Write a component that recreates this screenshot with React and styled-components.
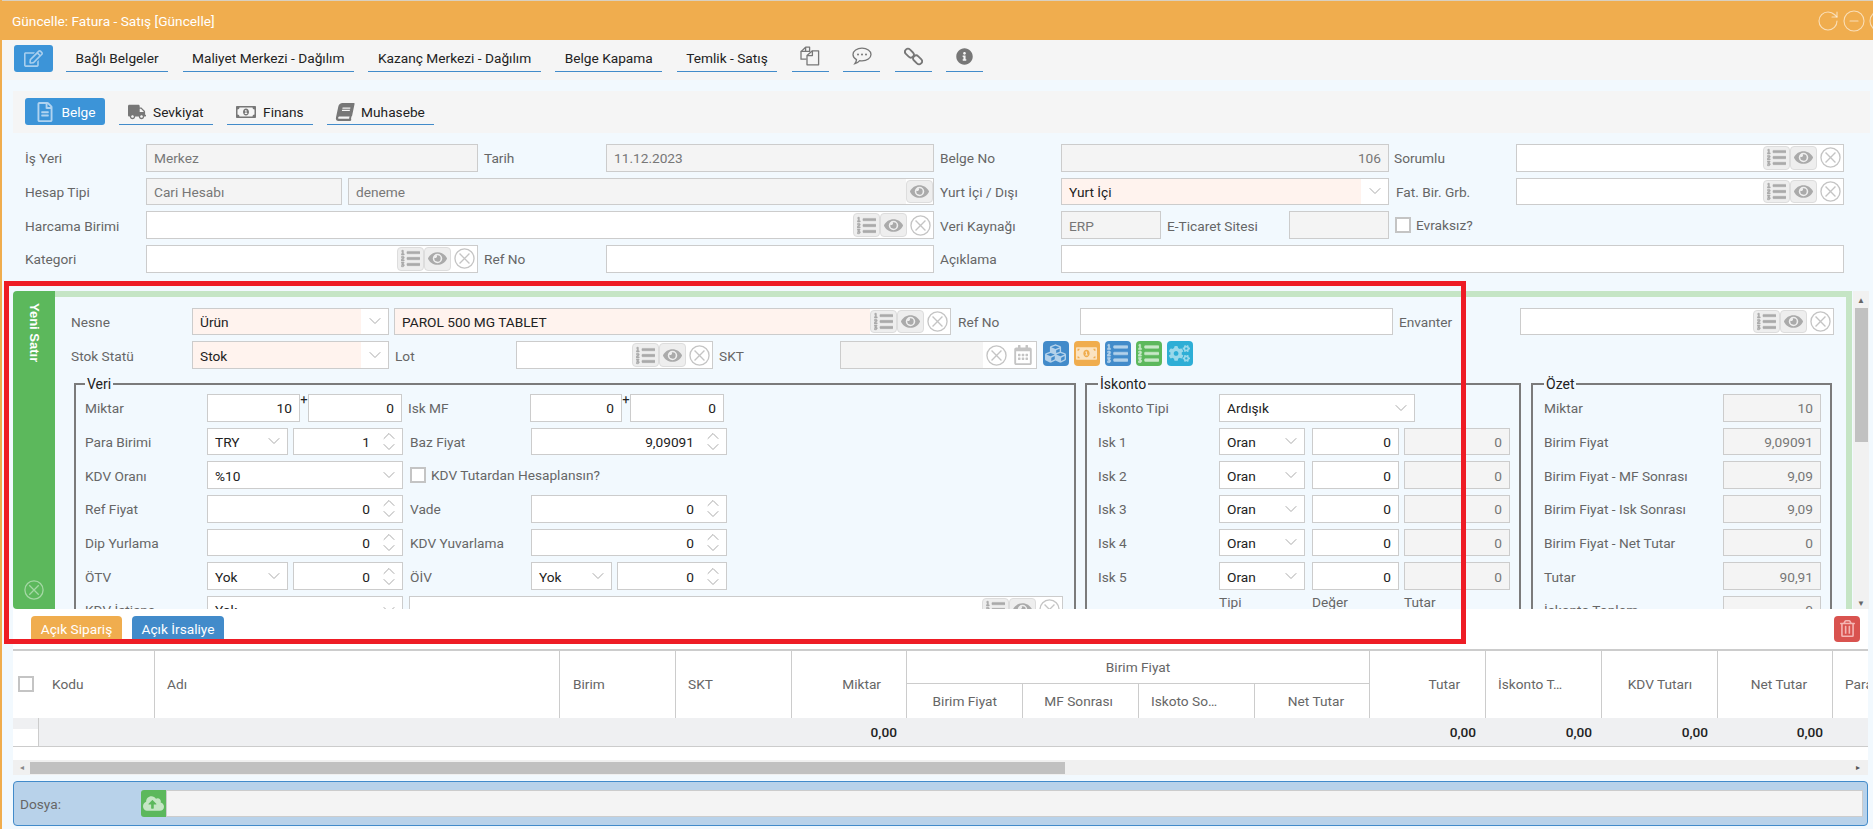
import React from 'react';
import styled, { createGlobalStyle } from 'styled-components';
import {
  FaRegEdit, FaRegFileAlt, FaTruck, FaRegMoneyBillAlt, FaMoneyBillAlt, FaBook,
  FaInfoCircle, FaListOl, FaEye, FaCubes, FaCogs, FaCloudUploadAlt, FaRegCalendarAlt, FaRegTrashAlt,
} from 'react-icons/fa';
import { ChevronDown, ChevronUp, RotateCw, CircleMinus } from 'lucide-react';

const Global = createGlobalStyle`
  html, body { margin: 0; padding: 0; overflow: hidden; background: #f2f9fe; }
  * { box-sizing: border-box; }
`;

const Page = styled.div`
  position: relative;
  width: 1873px;
  height: 829px;
  overflow: hidden;
  border-left: 2px solid #f0ad4e;
  background: #f2f9fe;
  font-family: Roboto, "Liberation Sans", sans-serif;
  font-size: 13.7px;
  color: #666;
`;
const TitleBar = styled.div`
  height: 40px;
  margin-left: -2px;
  background: #f0ad4e;
  border-top: 1px solid #d9d0c0;
  padding: 0 0 0 12px;
  display: flex;
  align-items: center;
  justify-content: space-between;
  color: #fff;
  overflow: hidden;
`;
const TitleIcons = styled.div`
  display: flex;
  gap: 2px;
  width: 57px;
  color: rgba(255, 255, 255, 0.6);
  flex: none;
  svg { flex: none; }
`;
const Toolbar = styled.div`
  height: 40px;
  background: #f5f5f5;
  display: flex;
  align-items: flex-start;
  padding: 5px 0 0 12px;
`;
const EditButton = styled.div`
  width: 39px;
  height: 27px;
  background: #3c94d8;
  border-radius: 3px;
  color: #a9cfee;
  display: flex;
  align-items: center;
  justify-content: center;
  font-size: 19px;
  margin-right: 13px;
`;
const ToolLink = styled.div`
  height: 27px;
  padding: 0 9.5px 1px;
  margin-right: 14.5px;
  border-bottom: 1px solid #428bca;
  color: #222;
  display: flex;
  align-items: center;
  white-space: nowrap;
`;
const ToolIcon = styled(ToolLink)`
  width: 37px;
  padding: 0 0 4px;
  justify-content: center;
  color: #777;
  font-size: 17px;
`;
const TabBar = styled.div`
  margin: 11px 3px 0 11px;
  height: 42px;
  background: #f5f5f5;
  padding: 7px 0 0 12px;
  display: flex;
  align-items: flex-start;
`;
const Tab = styled.div`
  height: 27px;
  display: flex;
  align-items: center;
  gap: 7px;
  padding: 1px 9.5px 0;
  margin-right: 13.5px;
  border-radius: ${p => (p.$active ? '3px' : '0')};
  background: ${p => (p.$active ? '#3c94d8' : 'transparent')};
  color: ${p => (p.$active ? '#fff' : '#222')};
  border-bottom: ${p => (p.$active ? 'none' : '1px solid #428bca')};
  svg { font-size: ${p => p.$icon || 18}px; color: ${p => (p.$active ? '#b0d3f0' : '#777')}; flex: none; }
`;
const SlantBook = styled(FaBook)`
  transform: skewX(-12deg);
`;
const FormGrid = styled.div`
  margin: 11px 0 0 23px;
  display: grid;
  grid-template-columns: 121px 332px 128px 328px 127px 328px 127px 328px;
  grid-auto-rows: 27.67px;
  row-gap: 6px;
`;
const GridLabel = styled.div`
  display: flex;
  align-items: center;
  padding: 1px 0 0 ${p => p.$pad || 0}px;
  white-space: nowrap;
`;
const Split = styled.div`
  display: flex;
  gap: 6px;
  align-items: center;
  grid-column: ${p => p.$span || 'auto'};
  height: 100%;
  min-width: 0;
`;
const Field = styled.div`
  flex: ${p => (p.$w ? 'none' : 1)};
  width: ${p => (p.$w ? `${p.$w}px` : 'auto')};
  height: 100%;
  min-width: 0;
  display: flex;
  align-items: center;
  justify-content: ${p => (p.$right ? 'flex-end' : 'flex-start')};
  padding: 1px 7px 0;
  border: 1px solid #ccc;
  background: ${p => (p.$tone === 'off' ? '#f4f4f4' : p.$tone === 'req' ? '#fff3ee' : '#fff')};
  color: ${p => (p.$tone === 'off' ? '#777' : '#222')};
  white-space: nowrap;
  grid-column: ${p => p.$span || 'auto'};
`;
const Value = styled.span`
  flex: 1;
  align-self: center;
  text-align: right;
  padding: 1px 6px 0 0;
`;
const FieldShell = styled.div`
  flex: ${p => (p.$w ? 'none' : 1)};
  width: ${p => (p.$w ? `${p.$w}px` : 'auto')};
  height: 100%;
  min-width: 0;
  display: flex;
  align-items: stretch;
  border: 1px solid #ccc;
  background: #fff;
  color: #222;
  white-space: nowrap;
  grid-column: ${p => p.$span || 'auto'};
`;
const ShellText = styled.div`
  flex: 1;
  min-width: 0;
  display: flex;
  align-items: center;
  padding: 1px 7px 0;
  background: ${p => (p.$tone === 'off' ? '#f4f4f4' : p.$tone === 'req' ? '#fff3ee' : '#fff')};
  color: ${p => (p.$tone === 'off' ? '#777' : '#222')};
`;
const Arrow = styled.div`
  width: 27px;
  flex: none;
  display: flex;
  align-items: center;
  justify-content: center;
  color: #aaa;
`;
const Spin = styled.div`
  width: 26px;
  flex: none;
  display: flex;
  flex-direction: column;
  align-items: center;
  justify-content: center;
  color: #aaa;
  svg { margin: -4.5px 0; flex: none; }
`;
const GrayButton = styled.div`
  width: 27px;
  margin: 1px 0;
  flex: none;
  border: 1px solid #ddd;
  border-radius: 4px;
  background: #eee;
  color: #aaa;
  display: flex;
  align-items: center;
  justify-content: center;
  font-size: 19px;
`;
const ListIcon = styled(FaListOl)`
  stroke: currentColor;
  stroke-width: 14;
`;
const ClearButton = styled.div`
  width: 26px;
  flex: none;
  display: flex;
  align-items: center;
  justify-content: center;
  color: #c4c4c4;
`;
const PanelRow = styled.div`
  margin: 18px 0 0 11px;
  height: 318px;
  display: flex;
`;
const GreenTab = styled.div`
  width: 42px;
  flex: none;
  background: #5cb85c;
  border-radius: 4px 0 0 4px;
  color: #a5d8a5;
  display: flex;
  flex-direction: column;
  align-items: center;
  justify-content: space-between;
  padding: 12px 0 9px;
`;
const VerticalText = styled.div`
  writing-mode: vertical-rl;
  font-family: "Liberation Sans", sans-serif;
  font-weight: 700;
  font-size: 13px;
  color: #fff;
  white-space: nowrap;
`;
const PanelBody = styled.div`
  width: 1797px;
  flex: none;
  border-top: 6px solid #c5e5c5;
  border-right: 6px solid #c5e5c5;
  overflow: hidden;
  padding: 11px 0 0 16px;
`;
const Row = styled.div`
  display: flex;
  align-items: center;
  height: 27.67px;
  margin-bottom: 6px;
`;
const Label = styled.div`
  width: ${p => p.$w}px;
  flex: none;
  white-space: nowrap;
  padding: 1px 0 0 ${p => p.$pad || 0}px;
`;
const Spacer = styled.div`
  width: ${p => p.$w}px;
  flex: none;
`;
const SquareIcon = styled.div`
  width: 25.5px;
  height: 25px;
  flex: none;
  margin-left: ${p => p.$gap || 5.5}px;
  background: ${p => p.$bg};
  border-radius: 4px;
  color: ${p => p.$fg};
  display: flex;
  align-items: center;
  justify-content: center;
  font-size: 21px;
  align-self: flex-start;
`;
const Sets = styled.div`
  display: flex;
  margin: 7px 0 0 3px;
`;
const Set = styled.fieldset`
  width: ${p => p.$w}px;
  flex: none;
  margin: 0 ${p => p.$gap || 0}px 0 0;
  padding: 2px 0 0 ${p => p.$pad}px;
  border: 2px solid #7b7b7b;
  height: 260px;
  min-width: 0;
`;
const Legend = styled.legend`
  padding: 0 2px;
  color: #222;
  font-size: 14px;
  line-height: 16px;
`;
const Plus = styled.div`
  width: 8px;
  flex: none;
  align-self: flex-start;
  color: #222;
  font-size: 13px;
  line-height: 12px;
  text-align: center;
`;
const CheckBox = styled.div`
  width: 16px;
  height: 16px;
  flex: none;
  border: 2px solid #c4c4c4;
  background: #fff;
  margin-right: 5px;
`;
const SideScroll = styled.div`
  width: 16px;
  flex: none;
  margin-left: 1px;
  background: #f1f1f1;
  display: flex;
  flex-direction: column;
  align-items: center;
  padding-top: 5px;
  color: #666;
  font-size: 8px;
  line-height: 10px;
`;
const SideThumb = styled.div`
  width: 13px;
  height: 134px;
  margin: 2px 0 auto;
  background: #c1c1c1;
`;
const ActionRow = styled.div`
  margin-left: 11px;
  width: 1855px;
  height: 40px;
  background: #fff;
  display: flex;
  align-items: flex-start;
  padding: 7px 8px 0 18px;
  gap: 10px;
`;
const SmallBtn = styled.div`
  height: 27px;
  width: ${p => p.$w}px;
  background: ${p => p.$bg};
  color: #fff;
  border-radius: 4px 4px 0 0;
  display: flex;
  align-items: center;
  justify-content: center;
  white-space: nowrap;
`;
const TrashBtn = styled.div`
  margin-left: auto;
  width: 26px;
  height: 26px;
  background: #d9534f;
  color: #f4b6b4;
  border-radius: 4px;
  display: flex;
  align-items: center;
  justify-content: center;
  font-size: 17px;
`;
const TableWrap = styled.div`
  margin-left: 11px;
  width: 1855px;
  height: 111px;
  background: #fff;
  overflow: hidden;
`;
const ScrollWrap = styled.div`
  margin-left: 11px;
  width: 1855px;
`;
const Table = styled.table`
  border-collapse: separate;
  border-spacing: 0;
  table-layout: fixed;
  width: 1936px;
`;
const Th = styled.th`
  font-weight: 400;
  color: #666;
  text-align: ${p => p.$align || 'left'};
  height: ${p => p.$h || 34}px;
  padding: ${p => (p.$align === 'right' ? '0 25px 0 8px' : p.$align === 'center' ? '0' : p.$flush ? '0' : '0 8px 0 12px')};
  border-top: ${p => (p.$first ? '2px solid #ccc' : 'none')};
  border-bottom: ${p => (p.$rule ? '1px solid #ccc' : 'none')};
  border-right: ${p => (p.$noline ? 'none' : '1px solid #ccc')};
  overflow: hidden;
  white-space: nowrap;
  text-overflow: ellipsis;
`;
const Td = styled.td`
  height: 29px;
  background: ${p => (p.$stub ? 'linear-gradient(#eff0f2 11px, #fff 11px)' : '#eff0f2')};
  border-bottom: 1px solid #ccc;
  border-right: ${p => (p.$stub ? '1px solid #ccc' : 'none')};
  text-align: right;
  padding: 0 10px 0 0;
  color: #222;
  font-weight: 500;
`;
const HeadCheck = styled(CheckBox)`
  margin: 0 0 0 5px;
`;
const HScroll = styled.div`
  height: 15.5px;
  background: #f0f0f0;
  display: flex;
  align-items: stretch;
  padding: 2px 0 1px 17px;
  color: #777;
`;
const HThumb = styled.div`
  width: 1035px;
  background: #c1c1c1;
`;
const ScrollEnd = styled.div`
  margin-left: auto;
  width: 12px;
  font-size: 8px;
  line-height: 12px;
  color: #555;
`;
const ScrollStart = styled.div`
  width: 0;
  font-size: 8px;
  line-height: 12px;
  color: #888;
  margin-left: -10px;
  margin-right: 10px;
`;
const FilePanel = styled.div`
  margin: 6px 0 0 11px;
  width: 1855px;
  height: 45px;
  background: #b8d2ea;
  border: 1px solid #428bca;
  border-radius: 4px;
  display: flex;
  align-items: center;
  padding: 0 4px 0 6px;
`;
const FileLabel = styled.div`
  width: 121px;
  flex: none;
`;
const UploadBtn = styled.div`
  width: 25px;
  height: 27px;
  flex: none;
  background: #5cb85c;
  border-radius: 3px 0 0 3px;
  color: #c5e6c5;
  display: flex;
  align-items: center;
  justify-content: center;
  font-size: 21px;
`;
const FileInput = styled.div`
  flex: 1;
  height: 27px;
  background: #f4f4f4;
  border: 1px solid #ccc;
`;
const Highlight = styled.div`
  position: absolute;
  left: 2px;
  top: 281px;
  width: 1462px;
  height: 363px;
  border: 5px solid #ee1c25;
  pointer-events: none;
`;

const ClearIcon = ({ size = 21 }) => (
  <svg width={size} height={size} viewBox="0 0 22 22" fill="none" stroke="currentColor" strokeWidth="1.4">
    <circle cx="11" cy="11" r="10" />
    <path d="M5.8 5.8 16.2 16.2M16.2 5.8 5.8 16.2" />
  </svg>
);
const FilesIcon = () => (
  <svg width="20" height="20" viewBox="0 0 20 20" fill="none" stroke="currentColor" strokeWidth="1.3" strokeLinejoin="round">
    <path d="M6 1.2h3.6v4.2H5.5L1 5.4v7.8h5.6" />
    <path d="M1 5.6 5.6 1.2V5.4" />
    <path d="M12.4 4.8h6.2V18.8H7V9.6Z" />
    <path d="M7 9.6h5.4V4.8" />
  </svg>
);
const CommentIcon = () => (
  <svg width="20" height="18" viewBox="0 0 20 18" fill="none" stroke="currentColor" strokeWidth="1.3">
    <path d="M10 1.2c5 0 9 2.8 9 6.3s-4 6.3-9 6.3c-.8 0-1.6-.1-2.3-.2-1.2 1.4-2.8 2.4-4.7 2.9.8-1 1.4-2.2 1.5-3.9C2.3 11.4 1 9.6 1 7.5 1 4 5 1.2 10 1.2Z" />
    <circle cx="6" cy="7.5" r="1" fill="currentColor" stroke="none" />
    <circle cx="10" cy="7.5" r="1" fill="currentColor" stroke="none" />
    <circle cx="14" cy="7.5" r="1" fill="currentColor" stroke="none" />
  </svg>
);
const LinkIcon = () => (
  <svg width="19" height="19" viewBox="0 0 19 19" fill="none" stroke="currentColor" strokeWidth="1.8">
    <rect x="0.4" y="3.2" width="10" height="6" rx="3" transform="rotate(45 5.4 6.2)" />
    <rect x="8.6" y="9.8" width="10" height="6" rx="3" transform="rotate(45 13.6 12.8)" />
  </svg>
);

const Clear = () => (
  <ClearButton><ClearIcon /></ClearButton>
);
const Lookup = ({ w, span, tone, children, eyeOnly }) => (
  <FieldShell $w={w} $span={span}>
    <ShellText $tone={tone}>{children}</ShellText>
    {!eyeOnly && <GrayButton><ListIcon /></GrayButton>}
    <GrayButton><FaEye /></GrayButton>
    {!eyeOnly && <Clear />}
  </FieldShell>
);
const Select = ({ w, span, tone, children }) => (
  <FieldShell $w={w} $span={span}>
    <ShellText $tone={tone}>{children}</ShellText>
    <Arrow><ChevronDown size={20} strokeWidth={1.2} /></Arrow>
  </FieldShell>
);
const Spinner = ({ w, children }) => (
  <FieldShell $w={w}>
    <Value>{children}</Value>
    <Spin><ChevronUp size={20} strokeWidth={1.2} /><ChevronDown size={20} strokeWidth={1.2} /></Spin>
  </FieldShell>
);
const Num = ({ w, tone, children }) => (
  <Field $w={w} $right $tone={tone}>{children}</Field>
);

const iskRows = ['Isk 1', 'Isk 2', 'Isk 3', 'Isk 4', 'Isk 5'];
const summary = [
  ['Miktar', '10'], ['Birim Fiyat', '9,09091'], ['Birim Fiyat - MF Sonrası', '9,09'],
  ['Birim Fiyat - Isk Sonrası', '9,09'], ['Birim Fiyat - Net Tutar', '0'], ['Tutar', '90,91'], ['İskonto Toplam', '0'],
];
const colWidths = [26, 116, 405, 116, 116, 115, 116, 116, 116, 115, 116, 116, 116, 115, 116];

export default function App() {
  return (
    <Page>
      <Global />
      <TitleBar>
        Güncelle: Fatura - Satış [Güncelle]
        <TitleIcons>
          <RotateCw size={24} strokeWidth={1.1} />
          <CircleMinus size={24} strokeWidth={1.1} />
          <CircleMinus size={24} strokeWidth={1.1} />
        </TitleIcons>
      </TitleBar>
      <Toolbar>
        <EditButton><FaRegEdit /></EditButton>
        <ToolLink>Bağlı Belgeler</ToolLink>
        <ToolLink>Maliyet Merkezi - Dağılım</ToolLink>
        <ToolLink>Kazanç Merkezi - Dağılım</ToolLink>
        <ToolLink>Belge Kapama</ToolLink>
        <ToolLink>Temlik - Satış</ToolLink>
        <ToolIcon><FilesIcon /></ToolIcon>
        <ToolIcon><CommentIcon /></ToolIcon>
        <ToolIcon><LinkIcon /></ToolIcon>
        <ToolIcon><FaInfoCircle /></ToolIcon>
      </Toolbar>
      <TabBar>
        <Tab $active $icon={20}><FaRegFileAlt />Belge</Tab>
        <Tab><FaTruck />Sevkiyat</Tab>
        <Tab $icon={20}><FaRegMoneyBillAlt />Finans</Tab>
        <Tab><SlantBook />Muhasebe</Tab>
      </TabBar>
      <FormGrid>
        <GridLabel>İş Yeri</GridLabel>
        <Field $tone="off">Merkez</Field>
        <GridLabel $pad={6}>Tarih</GridLabel>
        <Field $tone="off">11.12.2023</Field>
        <GridLabel $pad={6}>Belge No</GridLabel>
        <Field $tone="off" $right>106</Field>
        <GridLabel $pad={5}>Sorumlu</GridLabel>
        <Lookup />

        <GridLabel>Hesap Tipi</GridLabel>
        <Split $span="2 / 5">
          <Field $w={196} $tone="off">Cari Hesabı</Field>
          <Lookup tone="off" eyeOnly>deneme</Lookup>
        </Split>
        <GridLabel $pad={6}>Yurt İçi / Dışı</GridLabel>
        <Select tone="req">Yurt İçi</Select>
        <GridLabel $pad={7}>Fat. Bir. Grb.</GridLabel>
        <Lookup />

        <GridLabel>Harcama Birimi</GridLabel>
        <Lookup span="2 / 5" />
        <GridLabel $pad={6}>Veri Kaynağı</GridLabel>
        <Split>
          <Field $w={100} $tone="off">ERP</Field>
          <GridLabel style={{ width: 122 }}>E-Ticaret Sitesi</GridLabel>
          <Field $tone="off" style={{ marginLeft: -6 }} />
        </Split>
        <Split $span="7 / 9" style={{ gap: 0, paddingLeft: 6 }}>
          <CheckBox />Evraksız?
        </Split>

        <GridLabel>Kategori</GridLabel>
        <Lookup />
        <GridLabel $pad={6}>Ref No</GridLabel>
        <Field />
        <GridLabel $pad={6}>Açıklama</GridLabel>
        <Field $span="6 / 9" />
      </FormGrid>

      <PanelRow>
        <GreenTab>
          <VerticalText>Yeni Satır</VerticalText>
          <ClearIcon size={20} />
        </GreenTab>
        <PanelBody>
          <Row>
            <Label $w={121}>Nesne</Label>
            <Select w={197} tone="req">Ürün</Select>
            <Spacer $w={5} />
            <Lookup w={557} tone="req">PAROL 500 MG TABLET</Lookup>
            <Label $w={129} $pad={7}>Ref No</Label>
            <Field $w={313} />
            <Label $w={127} $pad={6}>Envanter</Label>
            <Lookup w={314} />
          </Row>
          <Row>
            <Label $w={121}>Stok Statü</Label>
            <Select w={197} tone="req">Stok</Select>
            <Label $w={127} $pad={6}>Lot</Label>
            <Lookup w={197} />
            <Label $w={127} $pad={6}>SKT</Label>
            <FieldShell $w={197}>
              <ShellText $tone="off" />
              <Clear />
              <Arrow><FaRegCalendarAlt style={{ fontSize: 20, color: '#c4c4c4' }} /></Arrow>
            </FieldShell>
            <SquareIcon $bg="#428bca" $fg="#b3d1ea" $gap={6}><FaCubes /></SquareIcon>
            <SquareIcon $bg="#f0ad4e" $fg="#fbe3c0"><FaMoneyBillAlt /></SquareIcon>
            <SquareIcon $bg="#428bca" $fg="#b3d1ea"><ListIcon /></SquareIcon>
            <SquareIcon $bg="#5cb85c" $fg="#c9e8c9"><ListIcon /></SquareIcon>
            <SquareIcon $bg="#2eaed6" $fg="#9ad8ea"><FaCogs /></SquareIcon>
          </Row>
          <Sets>
            <Set $w={1002} $gap={9} $pad={9}>
              <Legend>Veri</Legend>
              <Row>
                <Label $w={122}>Miktar</Label>
                <Num w={93}>10</Num><Plus>+</Plus><Num w={94}>0</Num>
                <Label $w={128} $pad={6}>Isk MF</Label>
                <Num w={92}>0</Num><Plus>+</Plus><Num w={94}>0</Num>
              </Row>
              <Row>
                <Label $w={122}>Para Birimi</Label>
                <Select w={81}>TRY</Select><Spacer $w={5} /><Spinner w={110}>1</Spinner>
                <Label $w={128} $pad={7}>Baz Fiyat</Label>
                <Spinner w={196}>9,09091</Spinner>
              </Row>
              <Row>
                <Label $w={122}>KDV Oranı</Label>
                <Select w={196}>%10</Select>
                <Spacer $w={7} /><CheckBox />KDV Tutardan Hesaplansın?
              </Row>
              <Row>
                <Label $w={122}>Ref Fiyat</Label>
                <Spinner w={196}>0</Spinner>
                <Label $w={128} $pad={7}>Vade</Label>
                <Spinner w={196}>0</Spinner>
              </Row>
              <Row>
                <Label $w={122}>Dip Yurlama</Label>
                <Spinner w={196}>0</Spinner>
                <Label $w={128} $pad={7}>KDV Yuvarlama</Label>
                <Spinner w={196}>0</Spinner>
              </Row>
              <Row>
                <Label $w={122}>ÖTV</Label>
                <Select w={81}>Yok</Select><Spacer $w={5} /><Spinner w={110}>0</Spinner>
                <Label $w={128} $pad={7}>ÖİV</Label>
                <Select w={81}>Yok</Select><Spacer $w={5} /><Spinner w={110}>0</Spinner>
              </Row>
              <Row>
                <Label $w={122}>KDV İstisna</Label>
                <Select w={196}>Yok</Select>
                <Spacer $w={6} />
                <Lookup w={654} />
              </Row>
            </Set>
            <Set $w={436} $gap={10} $pad={11}>
              <Legend>İskonto</Legend>
              <Row>
                <Label $w={121}>İskonto Tipi</Label>
                <Select w={196}>Ardışık</Select>
              </Row>
              {iskRows.map(name => (
                <Row key={name}>
                  <Label $w={121}>{name}</Label>
                  <Select w={86}>Oran</Select>
                  <Spacer $w={7} />
                  <Num w={87}>0</Num>
                  <Spacer $w={5} />
                  <Num w={106} tone="off">0</Num>
                </Row>
              ))}
              <Row style={{ marginTop: -8 }}>
                <Label $w={121} />
                <Label $w={93}>Tipi</Label>
                <Label $w={92}>Değer</Label>
                <Label $w={60}>Tutar</Label>
              </Row>
            </Set>
            <Set $w={301} $pad={11}>
              <Legend>Özet</Legend>
              {summary.map(([name, value]) => (
                <Row key={name}>
                  <Label $w={179}>{name}</Label>
                  <Num w={98} tone="off">{value}</Num>
                </Row>
              ))}
            </Set>
          </Sets>
        </PanelBody>
        <SideScroll>
          ▲
          <SideThumb />
          ▼
        </SideScroll>
      </PanelRow>
      <ActionRow>
        <SmallBtn $w={91} $bg="#f0ad4e">Açık Sipariş</SmallBtn>
        <SmallBtn $w={92} $bg="#428bca">Açık İrsaliye</SmallBtn>
        <TrashBtn><FaRegTrashAlt /></TrashBtn>
      </ActionRow>
      <TableWrap>
        <Table>
          <colgroup>
            {colWidths.map((w, i) => <col key={i} style={{ width: w }} />)}
          </colgroup>
          <thead>
            <tr>
              <Th rowSpan={2} $first $noline $flush $h={35}><HeadCheck /></Th>
              <Th rowSpan={2} $first style={{ paddingLeft: 13 }}>Kodu</Th>
              <Th rowSpan={2} $first>Adı</Th>
              <Th rowSpan={2} $first style={{ paddingLeft: 13 }}>Birim</Th>
              <Th rowSpan={2} $first>SKT</Th>
              <Th rowSpan={2} $first $align="right">Miktar</Th>
              <Th colSpan={4} $first $align="center" $rule $h={35}>Birim Fiyat</Th>
              <Th rowSpan={2} $first $align="right">Tutar</Th>
              <Th rowSpan={2} $first>İskonto T…</Th>
              <Th rowSpan={2} $first $align="right">KDV Tutarı</Th>
              <Th rowSpan={2} $first $align="right">Net Tutar</Th>
              <Th rowSpan={2} $first $noline>Para Birimi</Th>
            </tr>
            <tr>
              <Th $align="right">Birim Fiyat</Th>
              <Th $align="right">MF Sonrası</Th>
              <Th>Iskoto So…</Th>
              <Th $align="right">Net Tutar</Th>
            </tr>
          </thead>
          <tfoot>
            <tr>
              <Td $stub />
              <Td colSpan={4} />
              <Td>0,00</Td>
              <Td colSpan={4} />
              <Td>0,00</Td>
              <Td>0,00</Td>
              <Td>0,00</Td>
              <Td>0,00</Td>
              <Td />
            </tr>
          </tfoot>
        </Table>
      </TableWrap>
      <ScrollWrap>
        <HScroll>
          <ScrollStart>◂</ScrollStart>
          <HThumb />
          <ScrollEnd>▸</ScrollEnd>
        </HScroll>
      </ScrollWrap>
      <FilePanel>
        <FileLabel>Dosya:</FileLabel>
        <UploadBtn><FaCloudUploadAlt /></UploadBtn>
        <FileInput />
      </FilePanel>
      <Highlight />
    </Page>
  );
}
